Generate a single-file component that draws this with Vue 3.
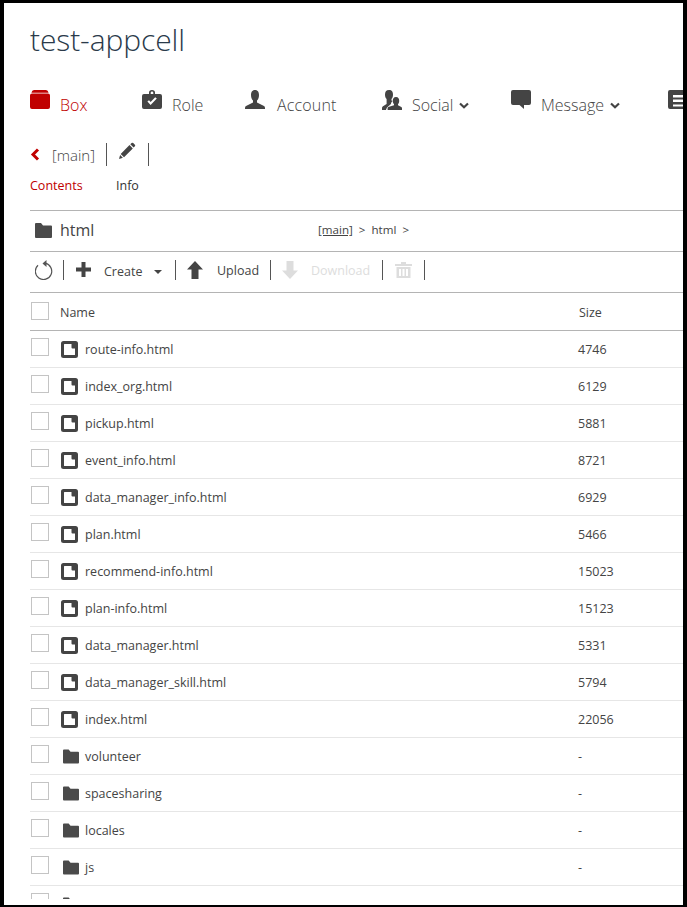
<template>
  <div class="frame">
    <div class="page">
      <h1 class="title">test-appcell</h1>

      <nav class="nav">
        <a v-for="item in navItems" :key="item.label" class="nav-item" :class="{ active: item.active }">
          <svg class="nav-icon" viewBox="0 0 20 20" v-html="item.icon"></svg>
          <span v-if="item.label" class="nav-label">{{ item.label }}</span>
          <svg v-if="item.menu" class="nav-chevron" viewBox="0 0 10 7">
            <path d="M1 1.5 5 5.2 9 1.5" fill="none" stroke="#444" stroke-width="2.2" />
          </svg>
        </a>
      </nav>

      <div class="box-head">
        <svg class="back" viewBox="0 0 10 13">
          <path d="M8 1.5 3 6.5 8 11.5" fill="none" stroke="#c00000" stroke-width="3" />
        </svg>
        <span class="box-name">[main]</span>
        <span class="vsep tall"></span>
        <svg class="pencil" viewBox="0 0 18 18">
          <path d="M13.6 1Q14.4.3 15.2 1L16.9 2.7Q17.6 3.5 16.9 4.3L15.6 5.6 12.3 2.3ZM11.5 3.1 14.8 6.4 6 15.2 2.7 11.9ZM2.1 13 4.9 15.8 1 17Z" fill="#444" />
        </svg>
        <span class="vsep tall"></span>
      </div>

      <div class="tabs">
        <a class="tab active">Contents</a>
        <a class="tab">Info</a>
      </div>

      <div class="path-bar">
        <svg class="path-folder" viewBox="0 0 17 15">
          <path d="M1 0H6L8 2.5H16Q17 2.5 17 3.5V14Q17 15 16 15H1Q0 15 0 14V1Q0 0 1 0Z" fill="#4a4a4a" />
        </svg>
        <span class="path-name">html</span>
        <span class="crumbs"><u>[main]</u>&nbsp; &gt; &nbsp;html &nbsp;&gt;</span>
      </div>

      <div class="toolbar">
        <svg class="refresh" viewBox="0 0 18 20">
          <path d="M3 5.2A8.2 8.2 0 1 0 10 3.2" fill="none" stroke="#555" stroke-width="1.2" />
          <path d="M7.5 3.4 11.5 0V7Z" fill="#555" />
        </svg>
        <span class="vsep"></span>
        <svg class="plus" viewBox="0 0 15 15"><path d="M5.5 0H9.5V5.5H15V9.5H9.5V15H5.5V9.5H0V5.5H5.5Z" fill="#444" /></svg>
        <span class="tool create">Create</span>
        <span class="caret"></span>
        <span class="vsep"></span>
        <svg class="arrow" viewBox="0 0 16 18"><path d="M8 0 16 8.5H11.5V18H4.5V8.5H0Z" fill="#444" /></svg>
        <span class="tool upload">Upload</span>
        <span class="vsep"></span>
        <svg class="arrow off" viewBox="0 0 16 18"><path d="M4.5 0H11.5V9.5H16L8 18 0 9.5H4.5Z" fill="#ddd" /></svg>
        <span class="tool download">Download</span>
        <span class="vsep"></span>
        <svg class="trash" viewBox="0 0 17 16">
          <path d="M6 0H11V2H17V4H0V2H6ZM1.5 5H15.5V16H1.5ZM4 7V14H6V7ZM7.5 7V14H9.5V7ZM11 7V14H13V7Z" fill="#ddd" fill-rule="evenodd" />
        </svg>
        <span class="vsep"></span>
      </div>

      <div class="list-head">
        <span class="check"></span>
        <span class="head-name">Name</span>
        <span class="head-size">Size</span>
      </div>

      <div v-for="row in rows" :key="row.id" class="row">
        <span class="check"></span>
        <svg v-if="row.size !== '-'" class="file-icon" viewBox="0 0 17 17">
          <path d="M2.5 0H14.5Q17 0 17 2.5V14.5Q17 17 14.5 17H2.5Q0 17 0 14.5V2.5Q0 0 2.5 0ZM3.5 3Q3 3 3 3.5V13.5Q3 14 3.5 14H13.5Q14 14 14 13.5V7.5H11.5Q10.5 7.5 10.5 6.5V3Z" fill="#444" fill-rule="evenodd" />
        </svg>
        <svg v-else class="folder-icon" viewBox="0 0 17 15">
          <path d="M1 0H6L8 2.5H16Q17 2.5 17 3.5V14Q17 15 16 15H1Q0 15 0 14V1Q0 0 1 0Z" fill="#4a4a4a" />
        </svg>
        <span class="row-name">{{ row.name }}</span>
        <span class="row-size">{{ row.hidden ? '' : row.size }}</span>
      </div>
    </div>
  </div>
</template>

<script setup>
const navItems = [
  { label: 'Box', active: true, icon: '<path d="M4 0H16Q18 0 18.6 2.8H1.4Q2 0 4 0ZM2 3.4H18Q20 3.4 20 5.4V17Q20 19 18 19H2Q0 19 0 17V5.4Q0 3.4 2 3.4Z" fill="#c00000"/>' },
  { label: 'Role', icon: '<path fill-rule="evenodd" fill="#444" d="M7 4V2.5Q7 0 10 0T13 2.5V4H18Q20 4 20 6V17Q20 19 18 19H2Q0 19 0 17V6Q0 4 2 4ZM8.7 4H11.3V2.8Q11.3 1.6 10 1.6T8.7 2.8ZM5.4 11.6 8.6 15 14.8 8.6 13.2 7.2 8.6 12 7 10.2Z"/>' },
  { label: 'Account', icon: '<path fill="#444" d="M10 0C13 0 14 2.5 14 5 14 8 13 9.5 12 10.5V12.5L19 16Q20 16.5 20 18V19H0V18Q0 16.5 1 16L8 12.5V10.5C7 9.5 6 8 6 5 6 2.5 7 0 10 0Z"/>' },
  { label: 'Social', menu: true, icon: '<path fill="#444" d="M7 0C10 0 11 2 11 4.5 11 6.5 10.4 8 9.5 9V10.4L10.6 11C9.4 12 9 13 9 14L5 17.5 3.9 20H0V18Q0 16.8 1 16.3L4.6 14V9C3.6 8 3 6.5 3 4.5 3 2 4 0 7 0ZM14 7C16.4 7 17.2 8.8 17.2 10.8 17.2 12.3 16.8 13.4 16 14.2V15.2L19.3 17Q20 17.4 20 18.3V20H5.6V18.3Q5.6 17.4 6.4 17L12 15.2V14.2C11.2 13.4 10.8 12.3 10.8 10.8 10.8 8.8 11.6 7 14 7Z"/>' },
  { label: 'Message', menu: true, icon: '<path fill="#444" d="M2 0H18Q20 0 20 2V13Q20 15 18 15H13L13 19 8.5 15H2Q0 15 0 13V2Q0 0 2 0Z"/>' },
  { label: '', icon: '<path fill-rule="evenodd" fill="#444" d="M2 0H18Q20 0 20 2V17Q20 19 18 19H2Q0 19 0 17V2Q0 0 2 0ZM5 5V7.6H15V5ZM5 9.6V12H15V9.6ZM5 14.4V16.6H15V14.4Z"/>' }
]

const rows = [
  { id: 1, name: 'route-info.html', size: '4746' },
  { id: 2, name: 'index_org.html', size: '6129' },
  { id: 3, name: 'pickup.html', size: '5881' },
  { id: 4, name: 'event_info.html', size: '8721' },
  { id: 5, name: 'data_manager_info.html', size: '6929' },
  { id: 6, name: 'plan.html', size: '5466' },
  { id: 7, name: 'recommend-info.html', size: '15023' },
  { id: 8, name: 'plan-info.html', size: '15123' },
  { id: 9, name: 'data_manager.html', size: '5331' },
  { id: 10, name: 'data_manager_skill.html', size: '5794' },
  { id: 11, name: 'index.html', size: '22056' },
  { id: 12, name: 'volunteer', size: '-' },
  { id: 13, name: 'spacesharing', size: '-' },
  { id: 14, name: 'locales', size: '-' },
  { id: 15, name: 'js', size: '-' },
  // only the top of this row shows, its text is below the fold
  { id: 16, name: '', size: '-', hidden: true }
]
</script>

<style>
html, body { margin: 0; background: #000; overflow: hidden; }
</style>

<style scoped>
.frame {
  width: 687px;
  height: 907px;
  box-sizing: border-box;
  background: #000;
  padding: 3px 4px 2px 4px;
  font-family: "Open Sans", "Liberation Sans", sans-serif;
  color: #444;
}
.page {
  height: 902px;
  background: #fff;
  overflow: hidden;
  box-sizing: border-box;
  padding-left: 26px;
  border-bottom: 6px solid #fff;
}
.title {
  margin: 0;
  height: 77px;
  padding-top: 16px;
  box-sizing: border-box;
  font-size: 30px;
  line-height: 41px;
  font-weight: 300;
  color: #2a3a4a;
  letter-spacing: -0.1px;
}
.nav {
  display: grid;
  grid-template-columns: 112px 103px 137px 129px 157px 40px;
  height: 60px;
}
.nav-item {
  display: flex;
  align-items: flex-start;
  white-space: nowrap;
}
.nav-item.active .nav-label { color: #c00000; }
.nav-item:nth-child(3) .nav-label { margin-left: 12px; letter-spacing: 0.15px; }
.nav-icon { width: 20px; height: 20px; margin-top: 10px; flex: none; }
.nav-label {
  margin-left: 10px;
  margin-top: 14px;
  font-size: 16px;
  line-height: 22px;
  font-weight: 300;
  color: #444;
}
.nav-chevron { width: 10px; height: 7px; margin: 22px 0 0 6px; }
.box-head { display: flex; align-items: center; height: 24px; margin-top: 2px; }
.back { width: 10px; height: 13px; }
.box-name { margin: 2px 0 0 12px; font-size: 15px; font-weight: 300; color: #444; }
.vsep { width: 1px; height: 20px; background: #555; flex: none; }
.vsep.tall { height: 23px; }
.box-name + .vsep { margin-left: 11px; }
.pencil { width: 18px; height: 18px; margin: 0 12px 6px 11px; }
.tabs { display: flex; height: 44px; padding-top: 11px; box-sizing: border-box; }
.tab { width: 86px; font-size: 12.5px; line-height: 18px; color: #333; }
.tab.active { color: #c00000; }
.path-bar {
  display: flex;
  align-items: center;
  height: 41px;
  box-sizing: border-box;
  border-top: 1px solid #b4b4b4;
}
.path-folder { width: 17px; height: 15px; margin: 0 8px 2px 5px; }
.path-name { width: 258px; margin-bottom: 2px; font-size: 16px; font-weight: 400; color: #444; }
.crumbs { margin-bottom: 3px; font-size: 11.6px; color: #444; }
.toolbar {
  display: flex;
  align-items: center;
  height: 41px;
  box-sizing: border-box;
  border-top: 1px solid #b4b4b4;
  padding: 0 0 5px 5px;
}
.refresh { width: 18px; height: 20px; margin-right: 10px; }
.plus { width: 15px; height: 15px; margin: 0 13px 0 12px; }
.tool { font-size: 12.5px; color: #444; }
.create { width: 50px; margin-top: 4px; }
.caret {
  width: 0;
  height: 0;
  border: 4px solid transparent;
  border-top-color: #444;
  border-bottom: 0;
  margin: 4px 13px 0 0;
}
.arrow { width: 16px; height: 18px; margin: 0 14px 0 11px; }
.arrow.off { margin-right: 13px; }
.upload { width: 53px; margin-top: 2px; }
.download { width: 71px; margin-top: 2px; color: #ddd; }
.trash { width: 17px; height: 16px; margin: 0 12px; }
.list-head {
  display: flex;
  align-items: center;
  height: 38px;
  box-sizing: border-box;
  border-top: 1px solid #b4b4b4;
}
.check {
  width: 18px;
  height: 18px;
  margin: 0 0 4px 1px;
  box-sizing: border-box;
  border: 1px solid #c4c4c4;
  flex: none;
}
.list-head .check { margin-bottom: 2px; }
.head-name { width: 519px; margin: 2px 0 0 11px; font-size: 12.5px; color: #444; }
.head-size { margin-top: 2px; font-size: 12.5px; color: #444; }
.row {
  display: flex;
  align-items: center;
  height: 37px;
  box-sizing: border-box;
  border-top: 1px solid #e6e6e6;
}
.list-head + .row { border-top-color: #b4b4b4; }
.file-icon { width: 17px; height: 17px; margin: 0 7px 0 12px; flex: none; }
.folder-icon { width: 16px; height: 15px; margin: 0 6px 0 14px; flex: none; }
.row-name { width: 493px; font-size: 12.5px; color: #444; }
.row-size { font-size: 12.5px; color: #444; }
</style>
